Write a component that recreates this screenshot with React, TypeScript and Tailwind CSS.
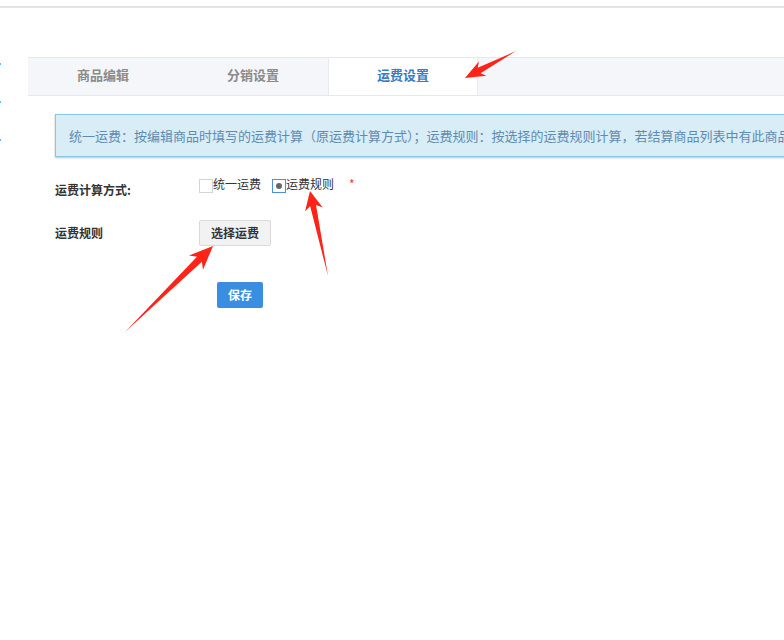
import React from "react";

type Pt = [number, number];

// 红色标注箭头：尾部细，头部三角
function arrowPoints(tail: Pt, tip: Pt, headLen: number, headHalf: number, shaftHalf: number) {
  const dx = tip[0] - tail[0];
  const dy = tip[1] - tail[1];
  const len = Math.hypot(dx, dy);
  const ux = dx / len;
  const uy = dy / len;
  const nx = -uy;
  const ny = ux;
  const bx = tip[0] - ux * headLen;
  const by = tip[1] - uy * headLen;
  const back = headLen * 0.25;
  const pts: Pt[] = [
    tail,
    [bx + nx * shaftHalf, by + ny * shaftHalf],
    [bx - ux * back + nx * headHalf, by - uy * back + ny * headHalf],
    tip,
    [bx - ux * back - nx * headHalf, by - uy * back - ny * headHalf],
    [bx - nx * shaftHalf, by - ny * shaftHalf],
  ];
  return pts.map((p) => p.join(",")).join(" ");
}

function Arrows() {
  return (
    <svg className="pointer-events-none absolute inset-0" width="784" height="640" viewBox="0 0 784 640">
      <polygon points={arrowPoints([516, 51], [465, 78], 16, 8, 3)} fill="#ff2318" />
      <polygon points={arrowPoints([328, 276], [310, 191], 15, 9, 3)} fill="#ff2318" />
      <polygon points={arrowPoints([125, 332], [213, 246], 19, 10, 3.5)} fill="#ff2318" />
    </svg>
  );
}

const tabs = ["商品编辑", "分销设置", "运费设置"];

export default function App() {
  return (
    <div
      className="relative h-[640px] w-[784px] overflow-hidden bg-white"
      style={{ fontFamily: '"Noto Sans CJK SC", "Noto Sans", sans-serif' }}
    >
      <div className="h-[6px]" />
      <div className="h-[2px] bg-[#e4e4e4]" />
      <div className="flex">
        <div className="flex w-[28px] shrink-0 flex-col gap-[36px] pt-[55px]">
          <span className="block h-[2px] w-[1px] bg-[#5bbff5]" />
          <span className="block h-[2px] w-[1px] bg-[#5bbff5]" />
          <span className="block h-[2px] w-[1px] bg-[#5bbff5]" />
        </div>
        <div className="min-w-0 flex-1 pt-[49px]">
          <div className="flex h-[39px] border-y border-[#e6e8ee] bg-[#f5f6fa]">
            {tabs.map((t, i) => (
              <div
                key={t}
                className={
                  i === 2
                    ? "flex w-[150px] items-center justify-center border-x border-[#e8eaef] bg-white pb-[3px] text-[13px] font-bold text-[#3a7cc0]"
                    : "flex w-[150px] items-center justify-center pb-[3px] text-[13px] font-bold text-[#8a8a8a]"
                }
              >
                {t}
              </div>
            ))}
          </div>

          <div className="pl-[27px] pt-[18px]">
            <div className="flex h-[43px] w-[780px] items-center whitespace-nowrap border border-[#86c6e8] bg-[#d9edf7] pl-[13px] text-[13px] text-[#5f8bb0] shadow-[0_1px_2px_rgba(0,0,0,0.25)]">
              统一运费：按编辑商品时填写的运费计算（原运费计算方式）；运费规则：按选择的运费规则计算，若结算商品列表中有此商品则按运费规则计算
            </div>

            <div className="mt-[18px] flex items-start">
              <div className="w-[144px] pt-[6px] text-[12px] font-bold text-[#333]">运费计算方式:</div>
              <div className="mt-[1px] flex items-start text-[12px] text-[#333]">
                <span className="mt-[3px] block h-[14px] w-[14px] border border-[#d4d4d4] bg-white" />
                <span className="leading-[16px]">统一运费</span>
                <span className="ml-[11px] mt-[3px] flex h-[14px] w-[14px] items-center justify-center border border-[#4a8fe0] bg-white">
                  <span className="block h-[6px] w-[6px] rounded-full bg-[#666]" />
                </span>
                <span className="leading-[16px]">运费规则</span>
                <span className="ml-[15px] text-[12px] leading-[16px] text-[#e5413b]">*</span>
              </div>
            </div>

            <div className="mt-[21px] flex items-center">
              <div className="w-[144px] text-[12px] font-bold text-[#333]">运费规则</div>
              <button className="h-[26px] rounded-[2px] border border-[#dadada] bg-[#f2f2f2] px-[11px] text-[12px] font-bold text-[#333]">
                选择运费
              </button>
            </div>

            <div className="mt-[35px] pl-[162px]">
              <button className="h-[26px] rounded-[2px] bg-[#3a8ee2] px-[11px] text-[12px] font-bold text-white">
                保存
              </button>
            </div>
          </div>
        </div>
      </div>
      <Arrows />
    </div>
  );
}
